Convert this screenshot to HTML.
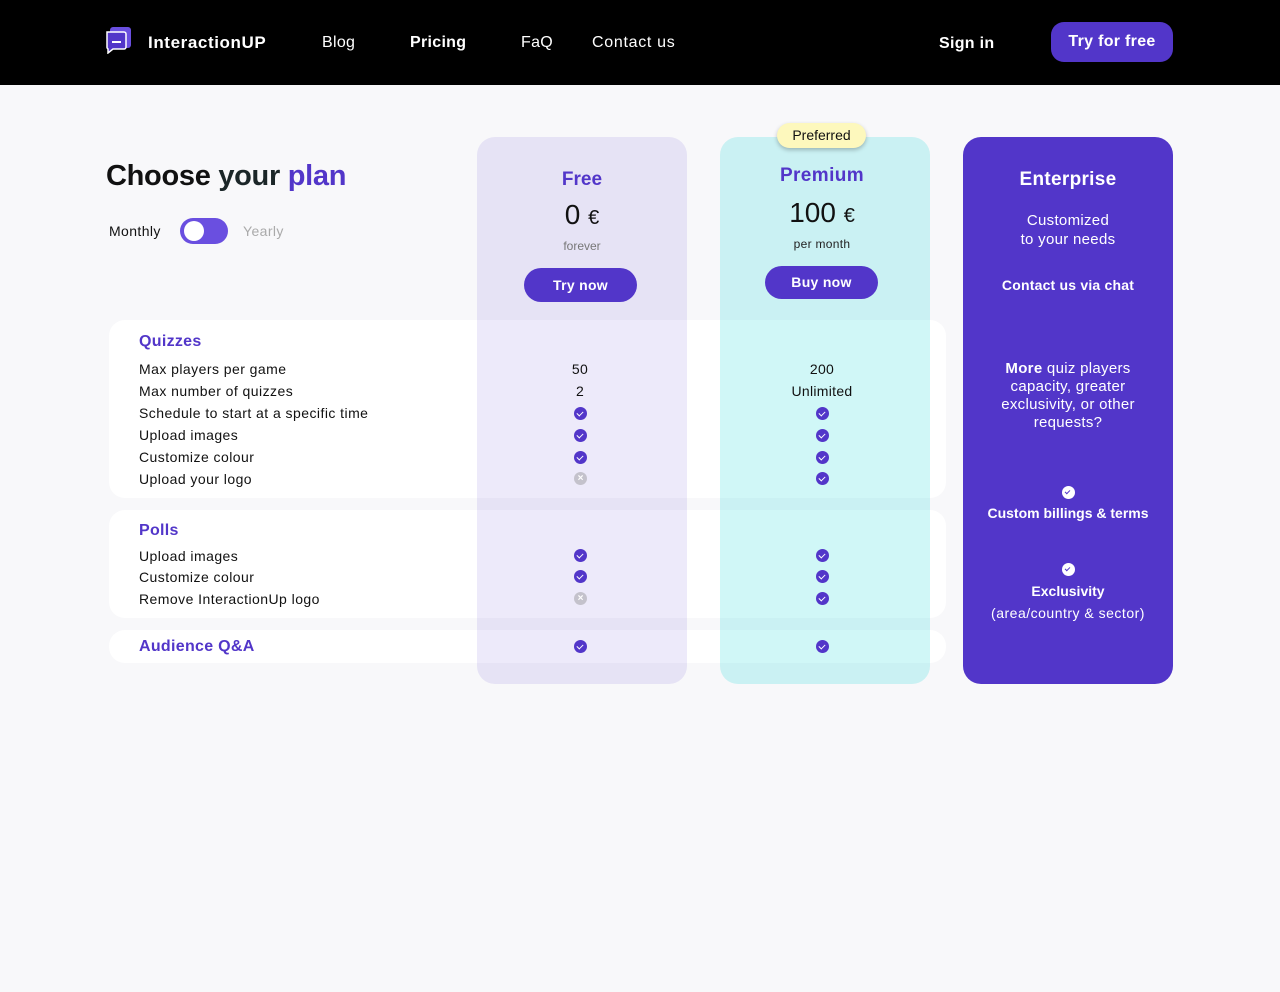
<!DOCTYPE html>
<html><head><meta charset="utf-8"><style>
*{margin:0;padding:0;box-sizing:border-box}
body{width:1280px;height:992px;background:#f8f8fa;font-family:"Liberation Sans",sans-serif;position:relative;overflow:hidden;color:#111}
.a{position:absolute}
.nav{left:0;top:0;width:1280px;height:85px;background:#000}
.nt{color:#fff;font-size:16px;top:33px;line-height:20px;letter-spacing:.3px}
.box{background:#fff;border-radius:16px;left:109px;width:837px}
.col{border-radius:18px;top:137px;height:547px;width:210px}
.l{left:139px;font-size:14px;line-height:22px;letter-spacing:.45px;color:#111}
.h{left:139px;font-size:16px;font-weight:bold;color:#5236c9;line-height:22px;letter-spacing:.3px}
.c{width:110px;text-align:center;font-size:14px;line-height:22px;letter-spacing:.3px}
.ck{width:13px;height:13px;border-radius:50%;background:#5236c9}
.ck:after{content:"";position:absolute;left:4px;top:3px;width:3px;height:5px;border:solid #fff;border-width:0 1.6px 1.6px 0;transform:rotate(45deg)}
.x{width:13px;height:13px;border-radius:50%;background:#c4c2cc;color:#fff;font-size:10px;line-height:13px;text-align:center;font-weight:bold}
.w{color:#fff;text-align:center;width:210px;left:963px}
.btn{background:#5236c9;color:#fff;font-weight:bold;font-size:14px;border-radius:17px;text-align:center;letter-spacing:.3px}
</style></head><body>
<div class="a nav"></div>
<svg class="a" style="left:106px;top:27px" width="26" height="27" viewBox="0 0 26 27"><rect x="4" y="0" width="21" height="21" rx="3" fill="#6a4fe0"/><path d="M1 5h17a2 2 0 0 1 2 2v13a2 2 0 0 1-2 2H7l-5 4v-4a2 2 0 0 1-1-2z" fill="#5236c9" stroke="#fff" stroke-width="1.5"/><path d="M6 14h9v2H6z" fill="#fff"/></svg>
<div class="a nt" style="left:148px;font-weight:bold;font-size:17px;letter-spacing:.6px">InteractionUP</div>
<div class="a nt" style="left:322px">Blog</div>
<div class="a nt" style="left:410px;font-weight:bold">Pricing</div>
<div class="a nt" style="left:521px">FaQ</div>
<div class="a nt" style="left:592px;letter-spacing:.7px">Contact us</div>
<div class="a nt" style="left:939px;font-weight:bold;top:34px">Sign in</div>
<div class="a btn" style="left:1051px;top:22px;width:122px;height:40px;line-height:40px;font-size:16px;border-radius:13px">Try for free</div>

<div class="a" style="left:106px;top:159px;font-size:29px;font-weight:bold;letter-spacing:-.3px;line-height:34px">Choose <span style="color:#1b2628">your</span> <span style="color:#5236c9">plan</span></div>
<div class="a" style="left:109px;top:222px;font-size:14px;line-height:18px;letter-spacing:.4px">Monthly</div>
<div class="a" style="left:180px;top:218px;width:48px;height:26px;border-radius:13px;background:#6a4fe0"><div class="a" style="left:4px;top:3px;width:20px;height:20px;border-radius:50%;background:#fff"></div></div>
<div class="a" style="left:243px;top:222px;font-size:14px;line-height:18px;color:#aaa;letter-spacing:.4px">Yearly</div>

<div class="a box" style="top:320px;height:178px"></div>
<div class="a box" style="top:510px;height:108px"></div>
<div class="a box" style="top:630px;height:33px"></div>

<div class="a col" style="left:477px;background:rgba(90,60,210,.11)"></div>
<div class="a col" style="left:720px;background:rgba(20,215,215,.2)"></div>
<div class="a col" style="left:963px;background:#5236c9"></div>

<div class="a" style="left:777px;top:123px;width:89px;height:25px;border-radius:13px;background:#fdf8bd;box-shadow:0 2px 4px rgba(0,0,0,.25);font-size:14px;text-align:center;line-height:25px">Preferred</div>

<div class="a" style="left:477px;width:210px;text-align:center;top:169px;font-size:19px;font-weight:bold;color:#5236c9">Free</div>
<div class="a" style="left:477px;width:210px;text-align:center;top:199px;font-size:28px">0 <span style="font-size:20px">€</span></div>
<div class="a" style="left:477px;width:210px;text-align:center;top:239px;font-size:12px;color:#777">forever</div>
<div class="a btn" style="left:524px;top:268px;width:113px;height:34px;line-height:34px">Try now</div>

<div class="a" style="left:720px;width:204px;text-align:center;top:165px;font-size:19px;font-weight:bold;color:#5236c9;letter-spacing:.4px">Premium</div>
<div class="a" style="left:720px;width:204px;text-align:center;top:197px;font-size:28px">100 <span style="font-size:20px">€</span></div>
<div class="a" style="left:720px;width:204px;text-align:center;top:237px;font-size:12px;color:#222;letter-spacing:.3px">per month</div>
<div class="a btn" style="left:765px;top:266px;width:113px;height:33px;line-height:33px">Buy now</div>

<div class="a w" style="top:169px;font-size:19px;font-weight:bold;letter-spacing:.3px">Enterprise</div>
<div class="a w" style="top:211px;font-size:15px;line-height:19px;letter-spacing:.3px">Customized<br>to your needs</div>
<div class="a w" style="top:277px;font-size:14px;font-weight:bold;letter-spacing:.2px">Contact us via chat</div>
<div class="a w" style="top:360px;font-size:15px;line-height:18px;left:983px;width:170px;letter-spacing:.3px"><b>More</b> quiz players capacity, greater exclusivity, or other requests?</div>
<div class="a" style="left:1062px;top:486px;width:13px;height:13px;border-radius:50%;background:#fff"><div class="a" style="left:4px;top:3px;width:3px;height:5px;border:solid #5236c9;border-width:0 1.6px 1.6px 0;transform:rotate(45deg)"></div></div>
<div class="a w" style="top:505px;font-size:14px;font-weight:bold">Custom billings &amp; terms</div>
<div class="a" style="left:1062px;top:563px;width:13px;height:13px;border-radius:50%;background:#fff"><div class="a" style="left:4px;top:3px;width:3px;height:5px;border:solid #5236c9;border-width:0 1.6px 1.6px 0;transform:rotate(45deg)"></div></div>
<div class="a w" style="top:583px;font-size:14px;font-weight:bold">Exclusivity</div>
<div class="a w" style="top:605px;font-size:14px;letter-spacing:.5px">(area/country &amp; sector)</div>

<div class="a h" style="top:331px">Quizzes</div>
<div class="a l" style="top:358px">Max players per game</div>
<div class="a l" style="top:380px">Max number of quizzes</div>
<div class="a l" style="top:402px">Schedule to start at a specific time</div>
<div class="a l" style="top:424px">Upload images</div>
<div class="a l" style="top:446px">Customize colour</div>
<div class="a l" style="top:468px">Upload your logo</div>
<div class="a c" style="left:525px;top:358px">50</div>
<div class="a c" style="left:525px;top:380px">2</div>
<div class="a c" style="left:767px;top:358px">200</div>
<div class="a c" style="left:767px;top:380px">Unlimited</div>
<div class="a ck" style="left:574px;top:407px"></div><div class="a ck" style="left:816px;top:407px"></div>
<div class="a ck" style="left:574px;top:429px"></div><div class="a ck" style="left:816px;top:429px"></div>
<div class="a ck" style="left:574px;top:451px"></div><div class="a ck" style="left:816px;top:451px"></div>
<div class="a x" style="left:574px;top:472px">×</div><div class="a ck" style="left:816px;top:472px"></div>

<div class="a h" style="top:520px">Polls</div>
<div class="a l" style="top:545px">Upload images</div>
<div class="a l" style="top:566px">Customize colour</div>
<div class="a l" style="top:588px">Remove InteractionUp logo</div>
<div class="a ck" style="left:574px;top:549px"></div><div class="a ck" style="left:816px;top:549px"></div>
<div class="a ck" style="left:574px;top:570px"></div><div class="a ck" style="left:816px;top:570px"></div>
<div class="a x" style="left:574px;top:592px">×</div><div class="a ck" style="left:816px;top:592px"></div>

<div class="a h" style="top:636px">Audience Q&amp;A</div>
<div class="a ck" style="left:574px;top:640px"></div><div class="a ck" style="left:816px;top:640px"></div>
</body></html>
